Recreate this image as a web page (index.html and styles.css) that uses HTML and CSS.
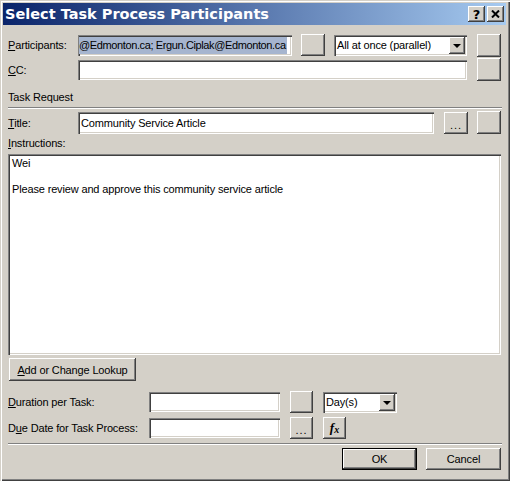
FILE: index.html
```html
<!DOCTYPE html>
<html lang="en">
<head>
<meta charset="UTF-8">
<title>Select Task Process Participants</title>
<link rel="stylesheet" href="styles.css">
</head>
<body>

<!-- Dialog window -->
<div class="dialog">

  <div class="titlebar">
    <span class="title">Select Task Process Participants</span>
    <span class="cap-btn">?</span>
    <span class="cap-btn">
      <svg width="9" height="8" viewBox="0 0 9 8"><path d="M1 0.5 L8 7.5 M8 0.5 L1 7.5" stroke="#000" stroke-width="2"/></svg>
    </span>
  </div>

  <div class="content">

    <div class="row row-part">
      <span class="lbl lbl-short"><u>P</u>articipants:</span>
      <div class="field f-part"><span class="sel">@Edmonton.ca; Ergun.Ciplak@Edmonton.ca</span></div>
      <span class="btn b-mid"></span>
      <div class="field combo c-mode"><span class="combo-text">All at once (parallel)</span><span class="combo-arrow"></span></div>
      <span class="btn b-side"></span>
    </div>

    <div class="row row-cc">
      <span class="lbl lbl-short"><u>C</u>C:</span>
      <div class="field f-cc"></div>
      <span class="btn b-side"></span>
    </div>

    <div class="section-lbl">Task Request</div>
    <div class="sep"></div>

    <div class="row row-title">
      <span class="lbl lbl-short"><u>T</u>itle:</span>
      <div class="field f-title"><span class="ftext">Community Service Article</span></div>
      <span class="btn b-dots">...</span>
      <span class="btn b-side"></span>
    </div>

    <div class="section-lbl lbl-instr"><u>I</u>nstructions:</div>
    <div class="field memo">
      <div>Wei</div>
      <div>&nbsp;</div>
      <div>Please review and approve this community service article</div>
    </div>

    <span class="btn b-lookup"><u>A</u>dd or Change Lookup</span>

    <div class="row row-dur">
      <span class="lbl lbl-long"><u>D</u>uration per Task:</span>
      <div class="field f-small"></div>
      <span class="btn b-small"></span>
      <div class="field combo c-days"><span class="combo-text">Day(s)</span><span class="combo-arrow"></span></div>
    </div>

    <div class="row row-due">
      <span class="lbl lbl-long">D<u>u</u>e Date for Task Process:</span>
      <div class="field f-small"></div>
      <span class="btn b-small b-dots">...</span>
      <span class="btn b-small b-fx"><i>f</i><i class="x">x</i></span>
    </div>

    <div class="sep sep-bottom"></div>

    <div class="row row-actions">
      <span class="btn b-action b-default">OK</span>
      <span class="btn b-action">Cancel</span>
    </div>

  </div>
</div>

</body>
</html>
```

FILE: styles.css
```css
/* Base */
* {
  box-sizing: border-box;
}

body {
  margin: 0;
  background-color: #d4d0c8;
  font-family: "Liberation Sans", Arial, sans-serif;
  font-size: 11px;
  letter-spacing: -0.15px;
  color: #000;
}

u {
  text-decoration: underline;
}

/* Window frame */
.dialog {
  width: 510px;
  height: 481px;
  padding: 3px 4px 0 3px;
  background-color: #d4d0c8;
  box-shadow: inset 1px 1px #d4d0c8, inset 2px 2px #fff,
              inset -1px -1px #404040, inset -2px -2px #808080;
}

.titlebar {
  height: 22px;
  display: flex;
  align-items: center;
  padding: 0 2px 0 2px;
  background: linear-gradient(to right, #0a246a, #a6caf0);
}

.title {
  flex: 1;
  color: #fff;
  font-family: "DejaVu Sans", Verdana, sans-serif;
  font-weight: bold;
  font-size: 14.5px;
  letter-spacing: 0;
}

.cap-btn {
  width: 17px;
  height: 16px;
  margin-left: 2px;
  display: flex;
  align-items: center;
  justify-content: center;
  background-color: #d4d0c8;
  box-shadow: inset -1px -1px #404040, inset 1px 1px #fff,
              inset -2px -2px #808080;
  font-family: "DejaVu Sans", sans-serif;
  font-weight: bold;
  font-size: 13px;
  letter-spacing: 0;
  line-height: 1;
}

/* Content area */
.content {
  padding: 7px 4px 0 5px;
}

.row {
  display: flex;
  align-items: center;
}

.lbl {
  flex: none;
}

.lbl-short {
  width: 70px;
}

.lbl-long {
  width: 141px;
}

/* Sunken text fields */
.field {
  flex: none;
  height: 21px;
  display: flex;
  align-items: center;
  overflow: hidden;
  white-space: nowrap;
  background-color: #fff;
  box-shadow: inset 1px 1px #808080, inset 2px 2px #404040,
              inset -1px -1px #fff, inset -2px -2px #d4d0c8;
}

.ftext {
  padding-left: 3px;
}

.sel {
  padding: 2px 1px 2px 0;
  background-color: #a6b5cf;
  line-height: 13px;
  letter-spacing: -0.38px;
}

/* Raised buttons */
.btn {
  flex: none;
  display: flex;
  align-items: center;
  justify-content: center;
  background-color: #d4d0c8;
  box-shadow: inset -1px -1px #404040, inset 1px 1px #fff,
              inset -2px -2px #808080, inset 2px 2px #d4d0c8;
}

/* Combo boxes */
.combo {
  justify-content: space-between;
  padding: 2px;
}

.combo-text {
  padding-left: 1px;
}

.combo-arrow {
  width: 16px;
  height: 17px;
  position: relative;
  background-color: #d4d0c8;
  box-shadow: inset -1px -1px #404040, inset 1px 1px #fff,
              inset -2px -2px #808080;
}

.combo-arrow::after {
  content: "";
  position: absolute;
  left: 4px;
  top: 7px;
  border-left: 4px solid transparent;
  border-right: 4px solid transparent;
  border-top: 4px solid #000;
}

/* Row 1: participants */
.row-part {
  height: 26px;
}

.f-part {
  width: 214px;
  padding-left: 1px;
}

.b-mid {
  width: 24px;
  height: 22px;
  margin-left: 9px;
}

.c-mode {
  width: 133px;
  margin-left: 9px;
}

.b-side {
  width: 24px;
  height: 23px;
  margin-left: 10px;
}

/* Row 2: CC */
.row-cc {
  height: 23px;
}

.f-cc {
  width: 389px;
  height: 20px;
}

/* Task request heading */
.section-lbl {
  height: 14px;
  line-height: 14px;
  margin-top: 9px;
}

.sep {
  height: 2px;
  margin-top: 3px;
  border-top: 1px solid #808080;
  border-bottom: 1px solid #fff;
}

/* Title row */
.row-title {
  height: 23px;
  margin-top: 2px;
}

.f-title {
  width: 356px;
  height: 22px;
}

.b-dots {
  width: 24px;
  height: 22px;
  margin-left: 10px;
  align-items: flex-end;
  padding-bottom: 5px;
  letter-spacing: 1px;
  line-height: 8px;
}

.row-title .b-side {
  margin-left: 9px;
}

/* Instructions */
.lbl-instr {
  margin-top: 2px;
}

.memo {
  width: 493px;
  height: 201px;
  margin-top: 4px;
  display: block;
  padding: 3px 4px;
  line-height: 13px;
  white-space: normal;
}

.b-lookup {
  width: 127px;
  height: 23px;
  margin: 3px 0 0 1px;
}

/* Duration and due date */
.row-dur {
  height: 22px;
  margin-top: 10px;
}

.row-due {
  height: 22px;
  margin-top: 4px;
}

.f-small {
  width: 131px;
  height: 20px;
}

.b-small {
  width: 23px;
  height: 22px;
  margin-left: 10px;
}

.c-days {
  width: 74px;
  height: 21px;
  margin-left: 10px;
}

.b-fx {
  font-family: "Liberation Serif", serif;
  font-weight: bold;
  font-size: 13px;
  letter-spacing: 0;
}

.b-fx .x {
  font-size: 10px;
  margin-top: 3px;
}

/* Bottom buttons */
.sep-bottom {
  margin-top: 4px;
}

.row-actions {
  justify-content: flex-end;
  margin-top: 3px;
  padding-right: 1px;
}

.b-action {
  width: 75px;
  height: 22px;
  margin-left: 9px;
}

.b-default {
  box-shadow: inset 0 0 0 1px #000, inset -2px -2px #404040,
              inset 2px 2px #fff, inset -3px -3px #808080;
}
```
